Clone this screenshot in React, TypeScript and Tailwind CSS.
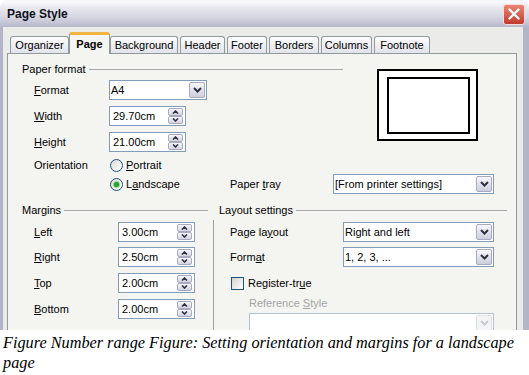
import React from 'react';

const sans = "font-['Liberation_Sans',Arial,sans-serif]";

const Mn = ({ text, at }: { text: string; at: number }) => (
  <>
    {text.slice(0, at)}
    <u className="underline-offset-[1px]">{text[at]}</u>
    {text.slice(at + 1)}
  </>
);

const DropBtn = ({ disabled }: { disabled?: boolean }) => (
  <div
    className={`w-[16px] h-[16px] mr-px flex items-center justify-center rounded-[2px] border ${
      disabled ? 'border-[#dde0e6] bg-[#f3f4f6]' : 'border-[#a9aac2] bg-linear-to-b from-[#f7f7fb] to-[#cdcedc]'
    }`}
  >
    <svg width="9" height="6" viewBox="0 0 9 6">
      <path d="M1 1l3.5 3.5L8 1" fill="none" stroke={disabled ? '#c9cbd3' : '#303044'} strokeWidth="2" />
    </svg>
  </div>
);

const Dropdown = ({ value, w, disabled }: { value: string; w: string; disabled?: boolean }) => (
  <div
    className={`${w} h-[20px] flex items-center bg-white border ${disabled ? 'border-[#b4c3d3]' : 'border-[#7f9db9]'}`}
  >
    <span className="flex-1 pl-[1px] whitespace-nowrap">{value}</span>
    <DropBtn disabled={disabled} />
  </div>
);

const SpinHalf = ({ up }: { up?: boolean }) => (
  <div className="w-[15px] h-[8px] flex items-center justify-center rounded-[2px] border border-[#a9aac2] bg-linear-to-b from-[#f7f7fb] to-[#d3d4e0]">
    <svg width="7" height="4" viewBox="0 0 7 4">
      <path d={up ? 'M1 3.5L3.5 1 6 3.5' : 'M1 0.5L3.5 3 6 0.5'} fill="none" stroke="#303044" strokeWidth="1.6" />
    </svg>
  </div>
);

const Spin = ({ value }: { value: string }) => (
  <div className="w-[77px] h-[20px] flex items-center bg-white border border-[#7f9db9]">
    <span className="flex-1 pl-[3px]">{value}</span>
    <div className="flex flex-col mr-[2px]">
      <SpinHalf up />
      <SpinHalf />
    </div>
  </div>
);

const Radio = ({ checked }: { checked?: boolean }) => (
  <div className="w-[13px] h-[13px] rounded-full border border-[#1c5180] bg-linear-to-br from-[#dcdcd7] to-white flex items-center justify-center">
    {checked && <div className="w-[5px] h-[5px] rounded-full bg-[#29a329] shadow-[0_0_0_1px_#8fd48f]" />}
  </div>
);

const Header = ({ text, w }: { text: string; w: string }) => (
  <div className={`${w} h-[12px] flex items-center gap-[3px]`}>
    <span className="leading-[12px] whitespace-nowrap">{text}</span>
    <div className="flex-1 h-px bg-[#a6a6a6]" />
  </div>
);

const tabs = [
  { name: 'Organizer', w: 'w-[59px]', mr: '' },
  { name: 'Page', w: 'w-[41px]', mr: '', active: true },
  { name: 'Background', w: 'w-[68px]', mr: 'mr-[2px]' },
  { name: 'Header', w: 'w-[45px]', mr: 'mr-[2px]' },
  { name: 'Footer', w: 'w-[40px]', mr: 'mr-[2px]' },
  { name: 'Borders', w: 'w-[50px]', mr: 'mr-[2px]' },
  { name: 'Columns', w: 'w-[51px]', mr: 'mr-[2px]' },
  { name: 'Footnote', w: 'w-[56px]', mr: '' },
];

export default function App() {
  return (
    <div className="w-[529px] h-[375px] bg-white overflow-hidden">
      <div className={`h-[330px] flex flex-col overflow-hidden text-[11px] text-black ${sans}`}>
        {/* title bar */}
        <div className="h-[27px] shrink-0 flex items-center justify-between pl-[7px] pr-[4px] rounded-t-[7px] border-t border-[#f6f6fa] bg-[linear-gradient(to_bottom,#fbfbfd_0%,#e8e8ef_25%,#d8d8e3_60%,#b7b7cb_100%)]">
          <span className="font-bold text-[12px] text-[#101018]">Page Style</span>
          <div className="w-[22px] h-[21px] rounded-[3px] border border-[#f3dcdc] bg-linear-to-b from-[#ea8574] to-[#c03a2e] flex items-center justify-center">
            <svg width="12" height="12" viewBox="0 0 12 12">
              <path d="M1.5 1.5l9 9M10.5 1.5l-9 9" stroke="white" strokeWidth="2.4" strokeLinecap="round" />
            </svg>
          </div>
        </div>

        {/* body */}
        <div className="flex-1 flex flex-col pt-[5px] pl-[4px] bg-[#ebebea] border-l-[3px] border-r-[6px] border-[#b4b4c8]">
          <div className="h-[21px] shrink-0 flex items-end pl-[3px]">
            {tabs.map((t) =>
              t.active ? (
                <div
                  key={t.name}
                  className={`${t.w} h-[22px] -mb-px relative z-10 flex items-center justify-center font-bold bg-[#f4f4f1] border-x border-[#919b9c] rounded-t-[3px] border-t-[3px] border-t-[#f2b443]`}
                >
                  {t.name}
                </div>
              ) : (
                <div
                  key={t.name}
                  className={`${t.w} ${t.mr} h-[17px] flex items-center justify-center border border-b-0 border-[#919b9c] rounded-t-[3px] bg-linear-to-b from-[#fdfdfe] to-[#e2e2ea]`}
                >
                  {t.name}
                </div>
              )
            )}
          </div>

          {/* panel */}
          <div className="w-[510px] flex-1 border border-[#919b9c] bg-[#f4f4f1] pl-[14px] pt-[9px]">
            {/* section 1 */}
            <div className="flex items-start">
              <div className="w-[321px] flex flex-col">
                <Header text="Paper format" w="w-[321px]" />
                <div className="mt-[5px] h-[20px] flex items-center pl-[12px]">
                  <span className="w-[75px]"><Mn text="Format" at={0} /></span>
                  <Dropdown value="A4" w="w-[98px]" />
                </div>
                <div className="mt-[6px] h-[20px] flex items-center pl-[12px]">
                  <span className="w-[75px]"><Mn text="Width" at={0} /></span>
                  <Spin value="29.70cm" />
                </div>
                <div className="mt-[6px] h-[20px] flex items-center pl-[12px]">
                  <span className="w-[75px]"><Mn text="Height" at={0} /></span>
                  <Spin value="21.00cm" />
                </div>
                <div className="mt-[4px] h-[18px] flex items-center pl-[12px]">
                  <span className="w-[76px]">Orientation</span>
                  <Radio />
                  <span className="ml-[3px]"><Mn text="Portrait" at={0} /></span>
                </div>
              </div>
              <div className="ml-[34px] mt-[6px] w-[101px] h-[72px] border-2 border-black bg-white">
                <div className="ml-[8px] mt-[6px] w-[83px] h-[57px] border-2 border-black" />
              </div>
            </div>

            {/* section 2 */}
            <div className="h-[20px] flex items-center pl-[12px]">
              <span className="w-[76px]" />
              <div className="w-[120px] flex items-center">
                <Radio checked />
                <span className="ml-[3px]"><Mn text="Landscape" at={1} /></span>
              </div>
              <span className="w-[103px]"><Mn text="Paper tray" at={6} /></span>
              <Dropdown value="[From printer settings]" w="w-[161px]" />
            </div>

            {/* section 3 */}
            <div className="mt-[10px] flex items-start">
              <div className="w-[186px] flex flex-col">
                <Header text="Margins" w="w-[186px]" />
                {[
                  { l: 'Left', v: '3.00cm', mt: 'mt-[6px]' },
                  { l: 'Right', v: '2.50cm', mt: 'mt-[5px]' },
                  { l: 'Top', v: '2.00cm', mt: 'mt-[6px]' },
                  { l: 'Bottom', v: '2.00cm', mt: 'mt-[6px]' },
                ].map((r) => (
                  <div key={r.l} className={`${r.mt} h-[20px] flex items-center pl-[12px]`}>
                    <span className="w-[84px]"><Mn text={r.l} at={0} /></span>
                    <Spin value={r.v} />
                  </div>
                ))}
              </div>
              <div className="ml-[5px] w-[294px] flex flex-col">
                <div className="pl-[6px]">
                  <Header text="Layout settings" w="w-[288px]" />
                </div>
                <div className="mt-[4px] pt-[2px] pb-[20px] pl-[16px] border-l border-[#a0a0a0] flex flex-col">
                  <div className="h-[20px] flex items-center">
                    <span className="w-[113px]"><Mn text="Page layout" at={7} /></span>
                    <Dropdown value="Right and left" w="w-[151px]" />
                  </div>
                  <div className="mt-[5px] h-[20px] flex items-center">
                    <span className="w-[113px]"><Mn text="Format" at={4} /></span>
                    <Dropdown value="1, 2, 3, ..." w="w-[151px]" />
                  </div>
                  <div className="mt-[6px] h-[20px] flex items-center">
                    <div className="ml-px w-[13px] h-[13px] border border-[#1c5180] bg-linear-to-br from-[#d4d4ce] to-white" />
                    <span className="ml-[4px]"><Mn text="Register-true" at={11} /></span>
                  </div>
                  <div className="mt-[4px] h-[12px] leading-[12px] ml-[19px] text-[#a4a4a4]">
                    Reference <Mn text="Style" at={0} />
                  </div>
                  <div className="mt-[4px] ml-[19px]">
                    <Dropdown value="" w="w-[245px]" disabled />
                  </div>
                </div>
              </div>
            </div>
          </div>
        </div>
      </div>

      <div className="pl-[3px] pt-[3px] font-['Liberation_Serif','Times_New_Roman',serif] italic text-[16.25px] leading-[20px] text-black">
        Figure Number range Figure: Setting orientation and margins for a landscape page
      </div>
    </div>
  );
}
